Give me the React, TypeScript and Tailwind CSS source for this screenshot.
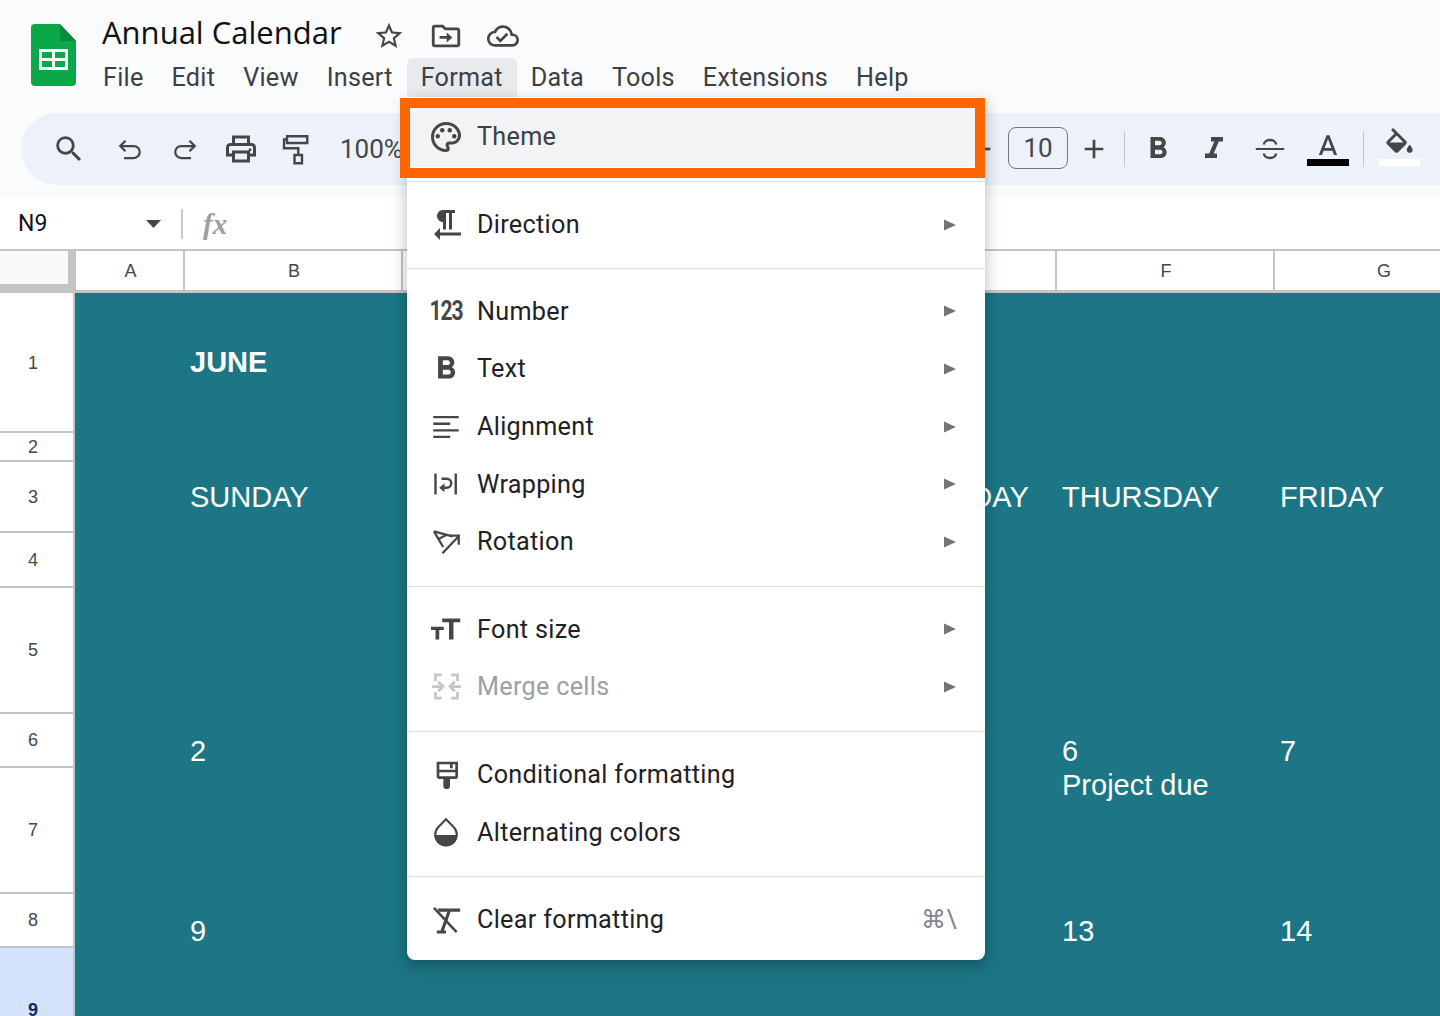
import React from "react";

const ICON = "#444746";

function I({ size = 36, children, color = ICON, className = "" }: { size?: number; children: React.ReactNode; color?: string; className?: string }) {
  return (
    <svg width={size} height={size} viewBox="0 0 24 24" fill={color} className={"shrink-0 " + className}>
      {children}
    </svg>
  );
}

function Stroke({ d, w = 1.5 }: { d: string; w?: number }) {
  return <path d={d} fill="none" stroke={ICON} strokeWidth={w} />;
}

function SheetsLogo() {
  return (
    <svg width="45" height="62" viewBox="0 0 45 62" className="shrink-0">
      <path d="M4 0H29L45 17V58a4 4 0 0 1-4 4H4a4 4 0 0 1-4-4V4a4 4 0 0 1 4-4z" fill="#0ba84a" />
      <path d="M29 0L45 17H29z" fill="#0a8a3e" />
      <path fillRule="evenodd" d="M8 25H37V46H8zM11 28V34H21V28zM24 28V34H34V28zM11 37V43H21V37zM24 37V43H34V37z" fill="#fff" />
    </svg>
  );
}

const Icons = {
  search: <path d="M15.5 14h-.79l-.28-.27A6.471 6.471 0 0 0 16 9.5 6.5 6.5 0 1 0 9.5 16c1.61 0 3.09-.59 4.23-1.57l.27.28v.79l5 4.99L20.49 19l-4.99-5zm-6 0C7.01 14 5 11.99 5 9.5S7.01 5 9.5 5 14 7.01 14 9.5 11.99 14 9.5 14z" />,
  undo: <Stroke d="M9 6.5L5.5 10L9 13.5M5.5 10H14.5a4 4 0 0 1 0 8H8" />,
  redo: <Stroke d="M15 6.5L18.5 10L15 13.5M18.5 10H9.5a4 4 0 0 0 0 8H16" />,
  print: (
    <>
      <path d="M19 8h-1V3H6v5H5c-1.66 0-3 1.34-3 3v6h4v4h12v-4h4v-6c0-1.66-1.34-3-3-3zM8 5h8v3H8V5zm8 12v2H8v-4h8v2zm2-2v-2H6v2H4v-4c0-.55.45-1 1-1h14c.55 0 1 .45 1 1v4h-2z" />
      <circle cx="18" cy="12.5" r="1" />
    </>
  ),
  paint: <Stroke d="M6 3.5H19.5V8H6zM6 5.7H4V11.5H13.5V16M11 16H16V21.5H11z" w={1.6} />,
  palette: (
    <>
      <path d="M12 22C6.49 22 2 17.51 2 12S6.49 2 12 2s10 4.04 10 9c0 3.31-2.69 6-6 6h-1.77c-.28 0-.5.22-.5.5 0 .12.05.23.13.33.41.47.64 1.06.64 1.67A2.5 2.5 0 0 1 12 22zm0-18c-4.41 0-8 3.59-8 8s3.59 8 8 8c.28 0 .5-.22.5-.5a.54.54 0 0 0-.14-.35c-.41-.46-.63-1.05-.63-1.65a2.5 2.5 0 0 1 2.5-2.5H16c2.21 0 4-1.79 4-4 0-3.86-3.59-7-8-7z" />
      <circle cx="6.5" cy="11.5" r="1.5" />
      <circle cx="9.5" cy="7.5" r="1.5" />
      <circle cx="14.5" cy="7.5" r="1.5" />
      <circle cx="17.5" cy="11.5" r="1.5" />
    </>
  ),
  direction: <path d="M10 10v5h2V4h2v11h2V4h2V2h-8C7.79 2 6 3.79 6 6s1.79 4 4 4zm-2 7v-3l-4 4 4 4v-3h14v-2H8z" />,
  bold: <path d="M15.6 10.79c.97-.67 1.65-1.77 1.65-2.79 0-2.26-1.75-4-4-4H7v14h7.04c2.09 0 3.71-1.7 3.71-3.79 0-1.52-.86-2.82-2.15-3.42zM10 6.5h3c.83 0 1.5.67 1.5 1.5s-.67 1.5-1.5 1.5h-3v-3zm3.5 9H10v-3h3.5c.83 0 1.5.67 1.5 1.5s-.67 1.5-1.5 1.5z" />,
  italic: <path d="M10 4v3h2.21l-3.42 8H6v3h8v-3h-2.21l3.42-8H18V4z" />,
  strike: (
    <>
      <Stroke d="M2.5 12H21.5" w={1.3} />
      <Stroke d="M8 9C8 7 10 6 12 6s4 1 4 3M8 15c0 2 2 3 4 3s4-1 4-3" w={1.6} />
    </>
  ),
  align: <Stroke d="M3 5H21M3 9.7H15M3 14.3H21M3 19H15" w={1.6} />,
  wrap: (
    <>
      <Stroke d="M5 5V19M18.5 5V19" w={1.6} />
      <Stroke d="M9 8.5H12.5a2.9 2.9 0 0 1 0 6H10.5" w={1.6} />
      <path d="M11 11.5V17.5L7.5 14.5z" />
    </>
  ),
  rotate: (
    <>
      <Stroke d="M3.5 4.5L16.5 8M3.5 4.5L10 15.5M6.5 10L12.5 6.8" w={1.6} />
      <Stroke d="M9.5 20L20.5 8.5M14.5 7.5H21V14" w={1.6} />
    </>
  ),
  fontsize: <path d="M9.5 5V7.5H14V19H17V7.5H21.5V5zM2 10.5V12.7H5V19H7.5V12.7H10.5V10.5z" />,
  merge: (
    <g fill="none" stroke="#c4c7c5" strokeWidth="2">
      <path d="M4 8V3.5H8.5M15.5 3.5H20V8M4 16V20.5H8.5M15.5 20.5H20V16" />
      <path d="M1.5 12H9M6 8.5L9.5 12L6 15.5M22.5 12H15M18 8.5L14.5 12L18 15.5" />
    </g>
  ),
  brush: <path fillRule="evenodd" d="M5 2H21V13a2 2 0 0 1-2 2H15V20a2.5 2.5 0 0 1-5 0V15H7a2 2 0 0 1-2-2zM7 4V8H19V4H17V7H15V4zM7 10V13H19V10z" />,
  drop: (
    <>
      <Stroke d="M12 3.5L6.8 8.8a7.2 7.2 0 1 0 10.4 0z" w={1.4} />
      <path d="M4.5 14H19.5a7.5 7.5 0 0 1-15 0z" />
    </>
  ),
  clear: (
    <>
      <Stroke d="M6.5 5H22M14.5 5L9 20.5M5.5 20.5H12" w={2.2} />
      <Stroke d="M3.5 3.5L19.5 20.5" w={1.8} />
    </>
  ),
};

function Arrow() {
  return (
    <svg width="14" height="14" viewBox="0 0 14 14" className="shrink-0">
      <path d="M1 1.5L13 7L1 12.5z" fill="#757575" />
    </svg>
  );
}

function Item({ icon, label, arrow = true, disabled = false, shortcut }: { icon: React.ReactNode; label: string; arrow?: boolean; disabled?: boolean; shortcut?: string }) {
  return (
    <div className="flex h-[57.6px] items-center pl-6 pr-7">
      <span className="flex w-[30px] items-center justify-center">{icon}</span>
      <span className={"ml-4 flex-1 " + (disabled ? "text-[#9aa0a6]" : "text-[#1f2125]")}>{label}</span>
      {arrow && <Arrow />}
      {shortcut && <span className="text-[25px] text-[#80868b]">{shortcut}</span>}
    </div>
  );
}

function Sep() {
  return <div className="mb-[14px] mt-[15px] h-px bg-[#dadce0]" />;
}

function FormatMenu() {
  return (
    <div className="absolute left-[407px] top-[97px] z-10 w-[578px] rounded-b-lg bg-white pb-[11px] pt-[11px] font-['Roboto',sans-serif] text-[25.2px] leading-none tracking-[0.3px] shadow-[0_6px_16px_rgba(0,0,0,0.28)]">
      <div className="flex h-[59px] items-center bg-[#f1f3f4] pb-[2px] pl-6 pr-7">
        <span className="flex w-[30px] items-center justify-center"><I>{Icons.palette}</I></span>
        <span className="ml-4 flex-1 text-[#3c4043]">Theme</span>
      </div>
      <div className="mb-[14px] mt-[14px] h-px bg-[#dadce0]" />
      <Item icon={<I>{Icons.direction}</I>} label="Direction" />
      <div className="mb-[14px] mt-[14px] h-px bg-[#dadce0]" />
      <Item icon={<span className="scale-x-[0.78] text-[27px] font-bold leading-none tracking-[-1.5px] text-[#444746]">123</span>} label="Number" />
      <Item icon={<I size={38}>{Icons.bold}</I>} label="Text" />
      <Item icon={<I size={34}>{Icons.align}</I>} label="Alignment" />
      <Item icon={<I>{Icons.wrap}</I>} label="Wrapping" />
      <Item icon={<I size={34}>{Icons.rotate}</I>} label="Rotation" />
      <Sep />
      <Item icon={<I>{Icons.fontsize}</I>} label="Font size" />
      <Item icon={<I size={33}>{Icons.merge}</I>} label="Merge cells" disabled />
      <Sep />
      <Item icon={<I size={32}>{Icons.brush}</I>} label="Conditional formatting" arrow={false} />
      <Item icon={<I>{Icons.drop}</I>} label="Alternating colors" arrow={false} />
      <Sep />
      <Item icon={<I size={34}>{Icons.clear}</I>} label="Clear formatting" arrow={false} shortcut="⌘\" />
    </div>
  );
}

function TopBar() {
  const menus = ["File", "Edit", "View", "Insert", "Format", "Data", "Tools", "Extensions", "Help"];
  return (
    <div className="h-[198px] shrink-0 bg-[#f9fbfd] font-['Roboto',sans-serif]">
      <div className="flex h-[113px] pl-[31px] pt-[24px]">
        <SheetsLogo />
        <div className="-mt-[24px] ml-[26px] flex flex-col">
          <div className="flex h-[57px] items-center pt-[8px]">
            <span className="font-['Open_Sans',sans-serif] text-[31px] leading-none text-[#111]">Annual Calendar</span>
            <span className="ml-[31px] flex items-center gap-[24px] pt-[6px]">
              <I size={32}>
                <path d="M22 9.24l-7.19-.62L12 2 9.19 8.63 2 9.24l5.46 4.73L5.82 21 12 17.27 18.18 21l-1.63-7.03L22 9.24zM12 15.4l-3.76 2.27 1-4.28-3.32-2.88 4.38-.38L12 6.1l1.71 4.04 4.38.38-3.32 2.88 1 4.28L12 15.4z" />
              </I>
              <I size={34}>
                <path d="M20 6h-8l-2-2H4c-1.1 0-2 .9-2 2v12c0 1.1.9 2 2 2h16c1.1 0 2-.9 2-2V8c0-1.1-.9-2-2-2zm0 12H4V6h5.17l2 2H20v10z" />
                <path d="M12.5 9.5L16.5 13L12.5 16.5V14H7.5V12H12.5z" />
              </I>
              <I size={32}>
                <path d="M19.35 10.04A7.49 7.49 0 0 0 12 4C9.11 4 6.6 5.64 5.35 8.04A5.994 5.994 0 0 0 0 14c0 3.31 2.69 6 6 6h13c2.76 0 5-2.24 5-5 0-2.64-2.05-4.78-4.65-4.96zM19 18H6c-2.21 0-4-1.79-4-4 0-2.05 1.53-3.76 3.56-3.97l1.07-.11.5-.95A5.469 5.469 0 0 1 12 6c2.62 0 4.88 1.86 5.39 4.43l.3 1.5 1.53.11A2.98 2.98 0 0 1 22 15c0 1.65-1.35 3-3 3zm-9-3.82l-2.09-2.09L6.5 13.5 10 17l6.01-6.01-1.41-1.41z" />
              </I>
            </span>
          </div>
          <div className="-ml-[13px] flex h-10 items-center pt-[1px] text-[25.2px] leading-none tracking-[0.25px] text-[#3c4043]">
            {menus.map((m) => (
              <span key={m} className={"flex h-10 items-center rounded-t-md px-[14px] " + (m === "Format" ? "bg-[#e8eaed]" : "")}>
                {m}
              </span>
            ))}
          </div>
        </div>
      </div>

      <div className="ml-[21px] flex h-[72px] items-center rounded-l-[36px] bg-[#edf2fa] pl-[31px] text-[#444746]">
        <I size={34}>{Icons.search}</I>
        <I className="ml-[26px]">{Icons.undo}</I>
        <I className="ml-[19px]">{Icons.redo}</I>
        <I className="ml-[20px]">{Icons.print}</I>
        <I className="ml-[19px]">{Icons.paint}</I>
        <span className="ml-[26px] text-[26px] leading-none">100%</span>
        <span className="flex-1" />
        <I size={32}>
          <path d="M5 11H19V13H5z" />
        </I>
        <span className="-mt-[2px] ml-[11px] flex h-[42px] w-[60px] items-center justify-center rounded-lg border border-[#747775] text-[26px] leading-none">10</span>
        <I size={32} className="ml-[10px]">
          <path d="M11 5h2v6h6v2h-6v6h-2v-6H5v-2h6z" />
        </I>
        <span className="ml-[14px] h-9 w-px bg-[#c7c7c7]" />
        <I className="ml-[15px]">{Icons.bold}</I>
        <I className="ml-[20px]">{Icons.italic}</I>
        <I className="ml-[20px]">{Icons.strike}</I>
        <span className="ml-[19px] flex w-[42px] flex-col items-center self-start pt-[18px]">
          <I size={34}>
            <path d="M11 3L5.5 17h2.25l1.12-3h6.25l1.12 3h2.25L13 3h-2zm-1.38 9L12 5.67 14.38 12H9.62z" />
          </I>
          <span className="-mt-[6px] h-[7px] w-[42px] bg-black" />
        </span>
        <span className="ml-[14px] h-9 w-px bg-[#c7c7c7]" />
        <span className="ml-[15px] flex w-[41px] flex-col items-center self-start pt-[15px]">
          <I size={35}>
            <path d="M16.56 8.94L7.62 0 6.21 1.41l2.38 2.38-5.15 5.15c-.59.59-.59 1.54 0 2.12l5.5 5.5c.29.29.68.44 1.06.44s.77-.15 1.06-.44l5.5-5.5c.59-.58.59-1.53 0-2.12zM5.21 10L10 5.21 14.79 10H5.21zM19 11.5s-2 2.17-2 3.5c0 1.1.9 2 2 2s2-.9 2-2c0-1.33-2-3.5-2-3.5z" />
          </I>
          <span className="-mt-[4px] h-[7px] w-[41px] bg-white" />
        </span>
        <span className="w-[20px] shrink-0" />
      </div>
    </div>
  );
}

function FormulaBar() {
  return (
    <div className="flex h-[51px] shrink-0 items-center bg-white pl-[18px]">
      <span className="w-[128px] font-['Roboto',sans-serif] text-[23px] leading-none text-[#111]">N9</span>
      <svg width="15" height="8" viewBox="0 0 15 8" className="shrink-0">
        <path d="M0 0H15L7.5 8z" fill="#444746" />
      </svg>
      <span className="ml-[20px] h-[30px] w-[2px] bg-[#c7c7c7]" />
      <span className="ml-[20px] pt-[2px] font-['Liberation_Serif',serif] text-[29px] font-bold italic leading-none text-[#9e9e9e]">fx</span>
    </div>
  );
}

function ColumnHeader() {
  const cols = [
    { l: "A", w: "w-[109px]" },
    { l: "B", w: "w-[218px]" },
    { l: "", w: "w-[218px]" },
    { l: "", w: "w-[218px]" },
    { l: "", w: "w-[218px]" },
    { l: "F", w: "w-[218px]" },
    { l: "G", w: "w-[218px]" },
  ];
  return (
    <div className="flex h-[44px] shrink-0 border-b-[3px] border-t-2 border-[#c4c4c4] bg-white">
      <div className="h-full w-[76px] shrink-0 border-b-[6px] border-r-[8px] border-[#c4c4c4] bg-[#f8f9fa]" />
      {cols.map((c, i) => (
        <div key={i} className={"flex shrink-0 items-center justify-center border-r-2 border-[#c4c4c4] pl-[2px] pt-[1px] text-[18px] text-[#444746] " + c.w}>
          {c.l}
        </div>
      ))}
    </div>
  );
}

type Row = { n: number; h: string; cells?: string[]; align?: string; bold?: boolean; active?: boolean; label?: string };

const rows: Row[] = [
  { n: 1, h: "h-[140px]", cells: ["JUNE"], align: "items-center pb-[2px]", bold: true, label: "pt-[2px]" },
  { n: 2, h: "h-[29px]", label: "pt-[2px]" },
  { n: 3, h: "h-[71px]", cells: ["SUNDAY", "", "", "WEDNESDAY", "THURSDAY", "FRIDAY"], align: "items-center pb-[2px]", label: "pt-[2px]" },
  { n: 4, h: "h-[55px]", label: "pt-[2px]" },
  { n: 5, h: "h-[126px]" },
  { n: 6, h: "h-[54px]", cells: ["2", "", "", "", "6", "7"], align: "items-end" },
  { n: 7, h: "h-[126px]", cells: ["", "", "", "", "Project due", ""], align: "items-start" },
  { n: 8, h: "h-[54px]", cells: ["9", "", "", "", "13", "14"], align: "items-end" },
  { n: 9, h: "h-[126px]", active: true },
];

function SheetRow({ row }: { row: Row }) {
  return (
    <div className={"flex shrink-0 " + row.h}>
      <div
        className={
          "flex w-[75px] shrink-0 items-center justify-center border-b-2 border-r-2 border-[#c4c4c4] pr-[7px] text-[18px] " +
          (row.active ? "bg-[#d3e3fd] font-bold text-[#0b2a5e] " : "bg-white text-[#444746] ") +
          (row.label ?? "")
        }
      >
        {row.n}
      </div>
      <div className="flex flex-1 bg-[#1c7685] font-['Liberation_Sans',sans-serif] text-[29px] leading-[34px] text-white">
        <div className="w-[109px] shrink-0" />
        {(row.cells ?? []).map((c, i) => (
          <div key={i} className={"flex w-[218px] shrink-0 whitespace-nowrap pl-[6px] " + (row.align ?? "") + (row.bold ? " font-bold" : "")}>
            {c}
          </div>
        ))}
      </div>
    </div>
  );
}

export default function App() {
  return (
    <div className="relative flex h-[1016px] w-[1440px] flex-col overflow-hidden bg-white font-['Liberation_Sans',sans-serif]">
      <TopBar />
      <FormulaBar />
      <ColumnHeader />
      <div className="flex shrink-0 flex-col">
        {rows.map((r) => (
          <SheetRow key={r.n} row={r} />
        ))}
      </div>
      <FormatMenu />
      <div className="absolute left-[400px] top-[98px] z-20 h-[80px] w-[585px] border-[10px] border-[#ff6600]" />
    </div>
  );
}
